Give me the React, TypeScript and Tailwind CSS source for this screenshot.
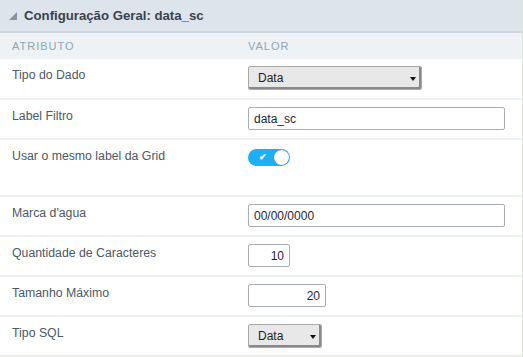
import React from "react";

function SelectBox({ width, value }: { width: string; value: string }) {
  return (
    <div
      className={`${width} h-[24px] flex items-center justify-between bg-[#e8e8e8] border border-[#a9a9a9] rounded-[2px] shadow-[inset_-2px_-2px_0_#8a8a8a] pl-[9px] pr-[5px] text-[12px] text-[#222]`}
    >
      <span>{value}</span>
      <svg width="6" height="4" viewBox="0 0 6 4" className="mt-[1px]">
        <path d="M0 0H6L3 4Z" fill="#111" />
      </svg>
    </div>
  );
}

function TextBox({
  width,
  value,
  right,
}: {
  width: string;
  value: string;
  right?: boolean;
}) {
  return (
    <div
      className={`${width} h-[23px] flex items-center bg-white border border-[#a9adb5] rounded-[2px] px-[5px] text-[12px] text-[#1d1f3a] ${
        right ? "justify-end" : ""
      }`}
    >
      {value}
    </div>
  );
}

function Toggle() {
  return (
    <div className="w-[42px] h-[17px] rounded-full bg-[#1eb0f6] flex items-center justify-between pl-[11px] pr-[1px] mt-[2px]">
      <span className="text-white text-[9px] leading-none font-bold">✔</span>
      <span className="w-[15px] h-[15px] rounded-full bg-white shadow-[0_0_1px_#0a86c9]" />
    </div>
  );
}

const rows: { label: string; height: string; control: React.ReactNode }[] = [
  { label: "Tipo do Dado", height: "h-[41px]", control: <SelectBox width="w-[174px]" value="Data" /> },
  { label: "Label Filtro", height: "h-[40px]", control: <TextBox width="w-[257px]" value="data_sc" /> },
  { label: "Usar o mesmo label da Grid", height: "h-[57px]", control: <Toggle /> },
  { label: "Marca d'agua", height: "h-[40px]", control: <TextBox width="w-[257px]" value="00/00/0000" /> },
  { label: "Quantidade de Caracteres", height: "h-[40px]", control: <TextBox width="w-[42px]" value="10" right /> },
  { label: "Tamanho Máximo", height: "h-[40px]", control: <TextBox width="w-[78px]" value="20" right /> },
  { label: "Tipo SQL", height: "h-[38px]", control: <SelectBox width="w-[74px]" value="Data" /> },
];

export default function App() {
  return (
    <div
      className="w-[523px] h-[357px] bg-white border-r border-[#dbe6d6] border-b-2 border-b-[#eeefe4] overflow-hidden"
      style={{ fontFamily: '"Liberation Sans", Arial, sans-serif' }}
    >
      <div className="h-[33px] bg-[#dde4eb] border-b-2 border-[#cdd7df] flex items-center gap-[7px] pl-[9px]">
        <svg width="8" height="8" viewBox="0 0 8 8">
          <path d="M8 0V8H0Z" fill="#8793a0" />
        </svg>
        <span className="text-[13.2px] font-bold text-[#3a4250]">Configuração Geral: data_sc</span>
      </div>
      <div className="h-[26px] bg-[#eef2f5] grid grid-cols-[248px_1fr] items-center text-[11px] tracking-[1px] text-[#8fa5b7]">
        <span className="pl-[12px]">ATRIBUTO</span>
        <span>VALOR</span>
      </div>
      {rows.map((r, i) => (
        <div
          key={r.label}
          className={`${r.height} grid grid-cols-[248px_1fr] ${
            i < rows.length - 1 ? "border-b-2 border-[#eff1f4]" : ""
          }`}
        >
          <span className="pl-[12px] pt-[7px] text-[12.3px] text-[#4d5865]">{r.label}</span>
          <div className="pt-[7px]">{r.control}</div>
        </div>
      ))}
    </div>
  );
}
